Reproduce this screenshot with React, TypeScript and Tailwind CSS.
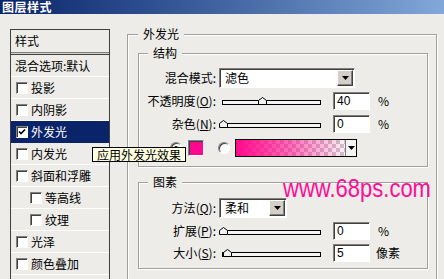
import React from 'react';

const sunken =
  'border border-t-[#808080] border-l-[#808080] border-r-white border-b-white shadow-[inset_1px_1px_0_#404040]';
const raised =
  'border border-t-white border-l-white border-r-[#404040] border-b-[#404040] shadow-[inset_-1px_-1px_0_#808080]';
const etched = 'border border-[#a0a0a0] shadow-[inset_1px_1px_0_#fff,1px_1px_0_#fff]';

const layers = [
  { name: '投影' },
  { name: '内阴影' },
  { name: '外发光', on: true },
  { name: '内发光' },
  { name: '斜面和浮雕' },
  { name: '等高线', sub: true },
  { name: '纹理', sub: true },
  { name: '光泽' },
  { name: '颜色叠加' },
];

const Check = ({ on }: { on?: boolean }) => (
  <span className={`flex h-[12px] w-[12px] shrink-0 items-center justify-center bg-white ${sunken}`}>
    {on && (
      <svg width="8" height="8" viewBox="0 0 8 8">
        <path d="M1 3.5 L3 5.5 L7 1.5" fill="none" stroke="#000" strokeWidth="1.6" />
      </svg>
    )}
  </span>
);

const Radio = ({ on }: { on?: boolean }) => (
  <span className={`flex h-[12px] w-[12px] shrink-0 items-center justify-center rounded-full bg-white ${sunken}`}>
    {on && <span className="h-[4px] w-[4px] rounded-full bg-black" />}
  </span>
);

const Arrow = () => (
  <svg width="7" height="4" viewBox="0 0 7 4">
    <polygon points="0,0 7,0 3.5,4" fill="#000" />
  </svg>
);

const Select = ({ value, w }: { value: string; w: string }) => (
  <div className={`flex h-[20px] items-center bg-white ${sunken} ${w}`}>
    <span className="flex-1 pl-[5px]">{value}</span>
    <span className={`mr-[1px] flex h-[16px] w-[16px] items-center justify-center bg-[#d4d0c8] ${raised}`}>
      <Arrow />
    </span>
  </div>
);

const Slider = ({ pos }: { pos: number }) => (
  <div className="relative ml-[3px] flex h-[8px] w-[99px] items-end">
    <div className="h-[5px] w-full border border-black bg-[#f4f4f4]" />
    <svg className="absolute bottom-0" style={{ left: pos - 4 }} width="9" height="8" viewBox="0 0 9 8">
      <polygon points="0.5,7.5 0.5,3.5 4.5,0.5 8.5,3.5 8.5,7.5" fill="#f2f2f2" stroke="#000" />
    </svg>
  </div>
);

const Num = ({ v }: { v: string }) => (
  <div className={`ml-[9px] flex h-[18px] w-[37px] items-center bg-white pl-[3px] font-['Liberation_Sans',sans-serif] text-[12px] ${sunken}`}>
    {v}
  </div>
);

const Label = ({ text, k }: { text: string; k?: string }) => (
  <span className="w-[77px] shrink-0 text-right">
    {text}
    {k && (
      <>
        (<span className="underline">{k}</span>)
      </>
    )}
    :
  </span>
);

export default function App() {
  return (
    <div className="relative h-[279px] w-[444px] overflow-hidden bg-[#edece8] font-['Noto_Sans_CJK_SC',sans-serif] text-[12px] leading-[14px] text-black">
      {/* title bar */}
      <div className="flex h-[14px] items-center bg-linear-to-r from-[#0a246a] to-[#82a7d9] pl-[2px] text-[12px] font-bold leading-[14px] tracking-[0.5px] text-white">
        图层样式
      </div>

      <div className="flex items-start">
        {/* styles list */}
        <div className="ml-[10px] mt-[15px] w-[100px] border border-b-0 border-[#404040]">
          <div className="flex h-[22px] items-center pl-[4px]">样式</div>
          <div className="h-[3px] border-y border-t-[#808080] border-b-[#404040] bg-[#d4d0c8]" />
          <div className="flex h-[22px] items-center border-b border-white pl-[4px]">混合选项:默认</div>
          {layers.map((l) => (
            <div
              key={l.name}
              className={`flex h-[22px] items-center gap-[3px] border-b ${l.sub ? 'pl-[19px]' : 'pl-[5px]'} ${
                l.on ? 'border-[#0a246a] bg-[#0a246a] text-white' : 'border-white'
              }`}
            >
              <Check on={l.on} />
              <span>{l.name}</span>
            </div>
          ))}
          <div className="h-[22px]" />
        </div>

        {/* outer glow */}
        <fieldset className={`ml-[17px] mt-[13px] w-[310px] pb-[40px] pl-[10px] pr-[8px] ${etched}`}>
          <legend className="bg-[#edece8] px-[5px]">外发光</legend>

          <fieldset className={`mt-[5px] pb-[5px] ${etched}`}>
            <legend className="ml-[9px] bg-[#edece8] px-[5px]">结构</legend>
            <div className="pt-[6px]">
              <div className="flex h-[23px] items-center gap-[3px]">
                <Label text="混合模式" />
                <Select value="滤色" w="w-[136px]" />
              </div>
              <div className="flex h-[23px] items-center gap-[3px]">
                <Label text="不透明度" k="O" />
                <Slider pos={40} />
                <Num v="40" />
                <span className="ml-[5px]">%</span>
              </div>
              <div className="flex h-[23px] items-center gap-[3px]">
                <Label text="杂色" k="N" />
                <Slider pos={1} />
                <Num v="0" />
                <span className="ml-[5px]">%</span>
              </div>
              <div className="flex h-[26px] items-center pl-[31px]">
                <Radio on />
                <span className={`ml-[6px] h-[16px] w-[16px] bg-[#ff0890] ${sunken}`} />
                <span className="ml-[14px]">
                  <Radio />
                </span>
                <div className="ml-[5px] flex h-[18px] w-[122px] border border-black">
                  <div className="flex-1 bg-[conic-gradient(#cccccc_25%,#ffffff_0_50%,#cccccc_0_75%,#ffffff_0)] bg-[length:8px_8px]">
                    <div className="h-full w-full bg-linear-to-r from-[#ff0a8c] via-[#ff0a8c99] to-[#ff0a8c10]" />
                  </div>
                  <div className="flex w-[11px] items-center justify-center border-l border-[#808080] bg-[#f4f4f4]">
                    <Arrow />
                  </div>
                </div>
              </div>
            </div>
          </fieldset>

          <fieldset className={`mt-[8px] pb-[4px] ${etched}`}>
            <legend className="ml-[9px] bg-[#edece8] px-[5px]">图素</legend>
            <div className="pt-[8px]">
              <div className="flex h-[22px] items-center gap-[3px]">
                <Label text="方法" k="Q" />
                <Select value="柔和" w="w-[68px]" />
              </div>
              <div className="flex h-[23px] items-center gap-[3px]">
                <Label text="扩展" k="P" />
                <Slider pos={1} />
                <Num v="0" />
                <span className="ml-[5px]">%</span>
              </div>
              <div className="flex h-[22px] items-center gap-[3px]">
                <Label text="大小" k="S" />
                <Slider pos={5} />
                <Num v="5" />
                <span className="ml-[3px]">像素</span>
              </div>
            </div>
          </fieldset>
        </fieldset>
      </div>

      {/* tooltip */}
      <div className="absolute left-[92px] top-[147px] flex h-[15px] items-center border border-black bg-[#ffffe1] px-[4px]">
        应用外发光效果
      </div>

      {/* watermark */}
      <div className="absolute left-[283px] top-[175px] origin-top-left scale-y-[1.2] font-['Liberation_Sans',sans-serif] text-[22px] leading-none text-[#ff0d96]">
        www.68ps.com
      </div>
    </div>
  );
}
